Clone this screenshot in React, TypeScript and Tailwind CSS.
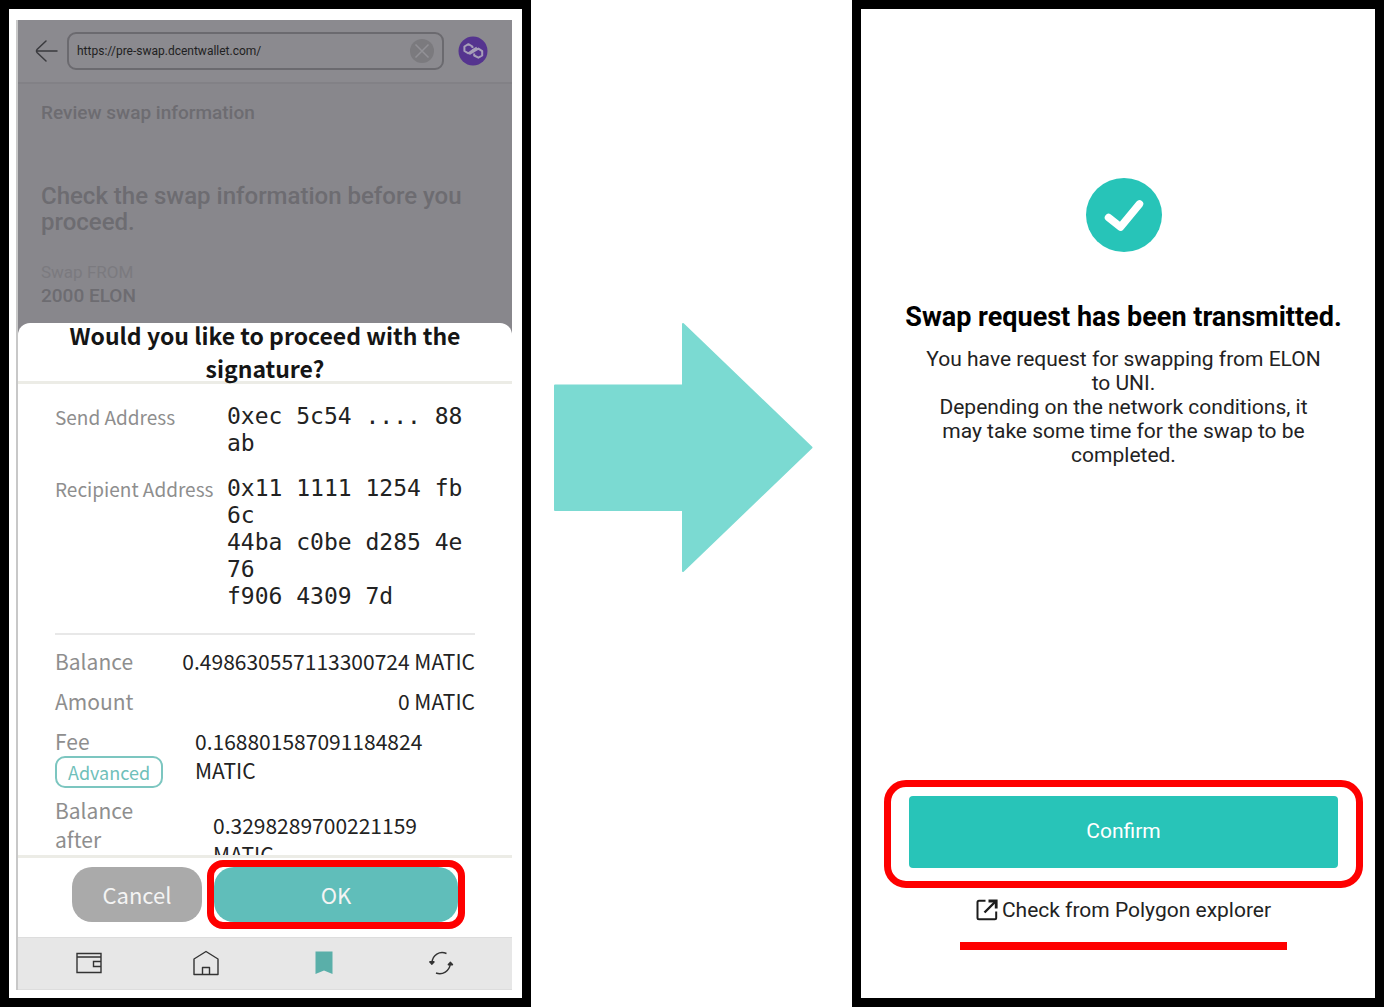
import type { ReactNode } from "react";

function BackIcon() {
  return (
    <svg viewBox="0 0 24 24" className="h-6 w-6" fill="none" stroke="#3a3a3e" strokeWidth="1.5" strokeLinecap="round">
      <path d="M23 12H2.500M12 2 L3 10.500 Q1.800 12 3 13.500 L12 22" />
    </svg>
  );
}

function PolygonIcon() {
  return (
    <svg viewBox="0 0 30 30" className="h-[30px] w-[30px] shrink-0" fill="none">
      <circle cx="15" cy="15" r="14.5" fill="#55348f" />
      <path
        d="M18.800 11.600 L14.600 14.200 L10.400 17.300 L6.400 15 V10.500 L10.400 8.200 L14.400 10.500 V12 M11.200 18.200 L15.400 15.600 L20.400 12.600 L24.200 15.200 V19.500 L20.400 21.700 L16.200 19.500 V17.600"
        stroke="#a79fb8"
        strokeWidth="2"
        strokeLinejoin="round"
      />
    </svg>
  );
}

function ClearIcon() {
  return (
    <svg viewBox="0 0 24 24" className="h-6 w-6" fill="none">
      <circle cx="12" cy="12" r="12" fill="#7b7a7e" />
      <path d="M5.5 5.5 18.5 18.5M18.5 5.5 5.5 18.5" stroke="#929196" strokeWidth="1.5" />
    </svg>
  );
}

function WalletIcon() {
  return (
    <svg viewBox="0 0 26 26" className="h-[26px] w-[26px]" fill="none" stroke="#333" strokeWidth="1.4">
      <path d="M1 3.500H25V22.500H1ZM1 7H25M25 11.500H17.500V16.500H25" />
    </svg>
  );
}

function HomeIcon() {
  return (
    <svg viewBox="0 0 26 26" className="h-[26px] w-[26px]" fill="none" stroke="#333" strokeWidth="1.4" strokeLinejoin="round">
      <path d="M1 24.500V9L13 1.500 25 9V24.500ZM9.500 24.500V17.500H16.500V24.500" />
    </svg>
  );
}

function BookmarkIcon() {
  return (
    <svg viewBox="0 0 26 26" className="h-[26px] w-[26px]" fill="#5aafa9">
      <path d="M4.500 1.500H21.500V24L13 20.500 4.500 24Z" />
    </svg>
  );
}

function RefreshIcon() {
  return (
    <svg viewBox="0 0 26 26" className="h-[26px] w-[26px]" fill="none" stroke="#333" strokeWidth="1.4">
      <path d="M18.500 3.500C11.500 0.500 4.500 5 4 12.500M8 23C14.500 25.500 21.500 21 22.300 14" />
      <path d="M2 12 H5.800 L3.900 14Z M20.500 14.500 H24.300 L22.400 12.500Z" fill="#333" strokeWidth="1.8" strokeLinejoin="round" />
    </svg>
  );
}

function ExternalIcon() {
  return (
    <svg viewBox="0 0 22 22" className="h-[22px] w-[22px]" fill="none" stroke="#1c1c1c" strokeWidth="2">
      <path d="M9.500 1.800H3A1.500 1.500 0 0 0 1.500 3.300V18.700A1.500 1.500 0 0 0 3 20.200H18.700A1.500 1.500 0 0 0 20.200 18.700V12.500" />
      <path d="M8.500 13.500 L19.500 2.500" strokeWidth="2.4" />
      <path d="M12.500 2H20.200V9.500" strokeWidth="2.8" />
    </svg>
  );
}

function AddressRow({ label, children }: { label: string; children: ReactNode }) {
  return (
    <div className="grid grid-cols-[172px_1fr] leading-[27px]">
      <dt className="text-[19px] leading-[27px] whitespace-nowrap text-[#8e8e8e]">{label}</dt>
      <dd className="font-['DejaVu_Sans_Mono',monospace] text-[23px] text-[#222]">{children}</dd>
    </div>
  );
}

function SignaturePhone() {
  return (
    <section className="flex min-h-0 flex-col border-[9px] border-black bg-white pt-[11px] pr-[10px] pb-2 pl-[7px]">
      <div className="flex min-h-0 flex-1 flex-col border-l-2 border-[#c8c8c8] bg-[#88878c] font-['Roboto',sans-serif]">
        <header className="flex h-16 shrink-0 items-center border-b-2 border-[#828186] bg-[#8b8a8f] pr-6 pb-px pl-4">
          <button aria-label="Back" className="shrink-0">
            <BackIcon />
          </button>
          <div className="ml-[9px] flex h-[38px] flex-1 items-center rounded-[9px] border-2 border-[#6b6a6f] px-2">
            <input
              aria-label="Address"
              defaultValue="https://pre-swap.dcentwallet.com/"
              className="min-w-0 flex-1 bg-transparent text-xs text-[#1f1f22] outline-none"
            />
            <button aria-label="Clear">
              <ClearIcon />
            </button>
          </div>
          <button aria-label="Polygon network" className="ml-3.5">
            <PolygonIcon />
          </button>
        </header>

        <div className="h-[239px] shrink-0 px-[23px] pt-[17px] font-medium text-[#6d6c71]">
          <h1 className="text-[19px] leading-6">Review swap information</h1>
          <h2 className="mt-[58px] text-2xl leading-[26px]">Check the swap information before you proceed.</h2>
          <p className="mt-[25px] text-[17px] leading-6 font-normal text-[#7b7a7f]">Swap FROM</p>
          <p className="text-[19px] leading-6">2000 ELON</p>
        </div>

        <div className="flex min-h-0 flex-1 flex-col rounded-t-xl bg-white font-['Noto_Sans_CJK_KR',sans-serif]">
          <h2 className="flex h-[61px] shrink-0 items-center justify-center border-b-3 border-[#ecece6] px-12 text-center text-[23px] leading-[33px] font-bold text-[#151515]">
            Would you like to proceed with the signature?
          </h2>

          <div className="min-h-0 flex-1 overflow-hidden px-[37px]">
            <dl className="flex flex-col gap-[18px] border-b-2 border-[#e8e8e8] pt-[19px] pb-[23px]">
              <AddressRow label="Send Address">
                0xec 5c54 .... 88
                <br />
                ab
              </AddressRow>
              <AddressRow label="Recipient Address">
                0x11 1111 1254 fb
                <br />
                6c
                <br />
                44ba c0be d285 4e
                <br />
                76
                <br />
                f906 4309 7d
              </AddressRow>
            </dl>
            <dl className="flex flex-col gap-[11px] pt-3 text-[21px] leading-[29px] text-[#222]">
              <div className="flex justify-between">
                <dt className="text-[#8e8e8e]">Balance</dt>
                <dd>0.498630557113300724 MATIC</dd>
              </div>
              <div className="flex justify-between">
                <dt className="text-[#8e8e8e]">Amount</dt>
                <dd>0 MATIC</dd>
              </div>
              <div className="grid grid-cols-[140px_1fr]">
                <dt className="h-[58px] text-[#8e8e8e]">
                  Fee
                  <button className="block h-8 rounded-[10px] border-2 border-[#7cc6c0] px-[11px] text-lg leading-7 text-[#6fc0ba]">
                    Advanced
                  </button>
                </dt>
                <dd>0.168801587091184824 MATIC</dd>
              </div>
              <div className="grid grid-cols-[158px_1fr]">
                <dt className="w-24 text-[#8e8e8e]">Balance after</dt>
                <dd className="pt-[15px]">
                  0.3298289700221159
                  <br />
                  MATIC
                </dd>
              </div>
            </dl>
          </div>

          <div className="flex h-[82px] shrink-0 gap-3 border-t-3 border-[#ecece6] px-[54px] pt-[9px] pb-[15px] text-[22px] text-[#f4f4f4]">
            <button className="w-[130px] rounded-[20px] bg-[#aaa]">Cancel</button>
            <div className="relative flex flex-1">
              <button className="flex-1 rounded-[20px] bg-[#60beba]">OK</button>
              <span className="pointer-events-none absolute -inset-[7px] rounded-2xl border-[7px] border-[#fe0000]" />
            </div>
          </div>

          <nav className="flex h-[53px] shrink-0 items-center justify-around border-y border-[#ddd] bg-[#e7e7e7] px-3 pb-0.5">
            <button aria-label="Wallet">
              <WalletIcon />
            </button>
            <button aria-label="Home">
              <HomeIcon />
            </button>
            <button aria-label="Bookmarks">
              <BookmarkIcon />
            </button>
            <button aria-label="Refresh">
              <RefreshIcon />
            </button>
          </nav>
        </div>
      </div>
    </section>
  );
}

function ResultPhone() {
  return (
    <section className="flex min-h-0 flex-col items-center border-[9px] border-black bg-white pt-[169px] pr-3 pb-12 pl-[23px] text-center font-['Roboto',sans-serif] text-[21px] text-[#222]">
      <svg viewBox="0 0 76 74" className="h-[74px] w-[76px] shrink-0" fill="none">
        <ellipse cx="38" cy="37" rx="38" ry="37" fill="#27c4b8" />
        <path d="M22.500 39.500 34.500 49 53.500 26" stroke="#fff" strokeWidth="7.5" strokeLinecap="round" strokeLinejoin="round" />
      </svg>
      <h1 className="mt-[49px] text-[27px] leading-8 font-bold whitespace-nowrap text-black">Swap request has been transmitted.</h1>
      <p className="mt-[14px] w-[410px] leading-6">
        You have request for swapping from ELON to UNI.
        <br />
        Depending on the network conditions, it may take some time for the swap to be completed.
      </p>

      <div className="mt-auto flex w-full flex-col items-center">
        <div className="self-stretch rounded-[22px] border-[7px] border-[#fe0000] px-[18px] pt-[9px] pb-[13px]">
          <button className="block h-[72px] w-full rounded-[4px] bg-[#28c4b8] text-white">Confirm</button>
        </div>
        <div className="mt-2 flex flex-col items-center border-b-8 border-[#fe0000] px-4 pb-[18px]">
          <a href="#explorer" className="flex items-center gap-1 leading-7">
            <ExternalIcon />
            Check from Polygon explorer
          </a>
        </div>
      </div>
    </section>
  );
}

export default function App() {
  return (
    <main className="grid h-screen grid-cols-[531fr_321fr_532fr] grid-rows-1 bg-white">
      <SignaturePhone />
      <div className="flex items-start justify-center pt-[321px] pr-[18px]">
        <svg viewBox="0 0 260 252" className="w-[260px]" fill="#7bdad2" stroke="#7bdad2" strokeWidth="2" strokeLinejoin="round">
          <path d="M2 64.500H130V3L258.500 126.500 130 250V189H2Z" />
        </svg>
      </div>
      <ResultPhone />
    </main>
  );
}
